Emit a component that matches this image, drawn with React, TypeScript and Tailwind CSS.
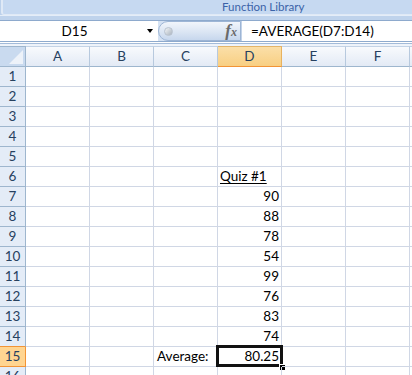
import React from "react";

const COLS = ["A", "B", "C", "D", "E", "F", "G"];
const VALUES: Record<number, string> = {
  7: "90",
  8: "88",
  9: "78",
  10: "54",
  11: "99",
  12: "76",
  13: "83",
  14: "74",
};

function Cell({ row, col }: { row: number; col: string }) {
  const base =
    "relative h-[20px] border-b border-r border-[#d0d7e5] flex items-center leading-[19px] whitespace-nowrap";
  if (col === "D" && row === 6) {
    return (
      <div className={base + " justify-start pl-[2px]"}>
        <span className="underline decoration-1 underline-offset-[2px]">Quiz #1</span>
      </div>
    );
  }
  if (col === "D" && VALUES[row]) {
    return <div className={base + " justify-end pr-[2px]"}>{VALUES[row]}</div>;
  }
  if (col === "C" && row === 15) {
    return <div className={base + " justify-start pl-[3px]"}>Average:</div>;
  }
  if (col === "D" && row === 15) {
    return (
      <div className={base + " justify-end pr-[2px]"}>
        80.25
        <div className="pointer-events-none absolute left-[-2px] right-[-2px] top-[-2px] bottom-[-1px] border-[3px] border-[#111]" />
        <div className="absolute right-[-5px] bottom-[-5px] h-[7px] w-[7px] bg-black border border-white" />
      </div>
    );
  }
  return <div className={base} />;
}

export default function App() {
  const rows = Array.from({ length: 16 }, (_, i) => i + 1);
  return (
    <div className="w-[412px] h-[375px] overflow-hidden bg-white font-['Lato',sans-serif] text-[13.5px] text-black">
      {/* Ribbon group label */}
      <div className="h-[15px] bg-[#bcd1eb] pl-[1px] pr-0">
        <div className="h-full rounded-bl-[3px] border-l-2 border-b border-[#dfe9f6] bg-[#c6d9f1] pl-[219px] text-[11.5px] leading-[13px] text-[#3b63a8]">
          Function Library
        </div>
      </div>
      <div className="h-[5px] bg-[#bfd3ec] border-t border-[#e4edf8]" />
      {/* Formula bar */}
      <div className="flex h-[22px] border-y border-[#8eaacd] bg-[#d5e2f3]">
        <div className="flex w-[158px] items-center bg-white">
          <div className="flex-1 pl-[2px] text-center leading-[20px]">D15</div>
          <div className="flex w-[11px] items-center justify-start">
            <div className="h-0 w-0 border-x-[3.5px] border-x-transparent border-t-[4px] border-t-black" />
          </div>
        </div>
        <div className="flex w-[83px] items-center rounded-l-full border border-[#9db5d5] bg-linear-to-b from-[#f1f5fb] via-[#dde7f4] to-[#c7d7ed]">
          <div className="ml-[5px] h-[9px] w-[9px] rounded-full border border-[#b9c3cf] bg-linear-to-br from-[#f4f6f8] to-[#a9b3be]" />
          <div className="flex-1" />
          <div className="mr-[3px] font-['Liberation_Serif',serif] text-[17px] font-bold italic leading-[18px] text-[#6a6a6a]">
            f<span className="text-[12px]">x</span>
          </div>
        </div>
        <div className="w-[1px] bg-[#c3d3e8]" />
        <div className="flex-1 bg-white pl-[9px] leading-[20px] whitespace-nowrap">=AVERAGE(D7:D14)</div>
      </div>
      <div className="h-[1px] bg-white" />
      <div className="h-[1px] bg-[#a3bbd9]" />
      <div className="h-[2px] bg-[#eef3fa]" />
      {/* Grid */}
      <div className="grid grid-cols-[26px_repeat(7,64px)]">
        {/* corner */}
        <div className="relative h-[21px] border-t border-b border-r border-[#9eb6ce] bg-[#c9daef]">
          <div className="absolute right-[2px] bottom-[2px] h-0 w-0 border-l-[14px] border-l-transparent border-b-[14px] border-b-[#edf2f9]" />
        </div>
        {COLS.map((c) =>
          c === "D" ? (
            <div
              key={c}
              className="flex h-[21px] items-center justify-center border-t border-t-[#e3b56a] border-b border-b-[#f29436] border-r border-r-[#e8b25f] bg-linear-to-b from-[#fbdfa8] to-[#f8cf82] leading-[19px] text-[#27415f]"
            >
              {c}
            </div>
          ) : (
            <div
              key={c}
              className="flex h-[21px] items-center justify-center border-t border-t-[#c3d3e6] border-b border-b-[#9eb6ce] border-r border-r-[#b7c9de] bg-linear-to-b from-[#f8fafd] to-[#e3eaf5] leading-[19px] text-[#27415f]"
            >
              {c}
            </div>
          )
        )}
        {rows.map((r) => (
          <React.Fragment key={r}>
            {r === 15 ? (
              <div className="flex h-[20px] items-center justify-center border-b border-r border-[#f29436] bg-[#ffd591] leading-[19px] text-[#27415f]">
                {r}
              </div>
            ) : (
              <div
                className={
                  "flex h-[20px] items-center justify-center border-b border-r bg-[#e4ecf7] leading-[19px] text-[#27415f] " +
                  (r === 14 ? "border-b-[#f29436] border-r-[#9eb6ce]" : "border-[#9eb6ce]")
                }
              >
                {r}
              </div>
            )}
            {COLS.map((c) => (
              <Cell key={c} row={r} col={c} />
            ))}
          </React.Fragment>
        ))}
      </div>
    </div>
  );
}
